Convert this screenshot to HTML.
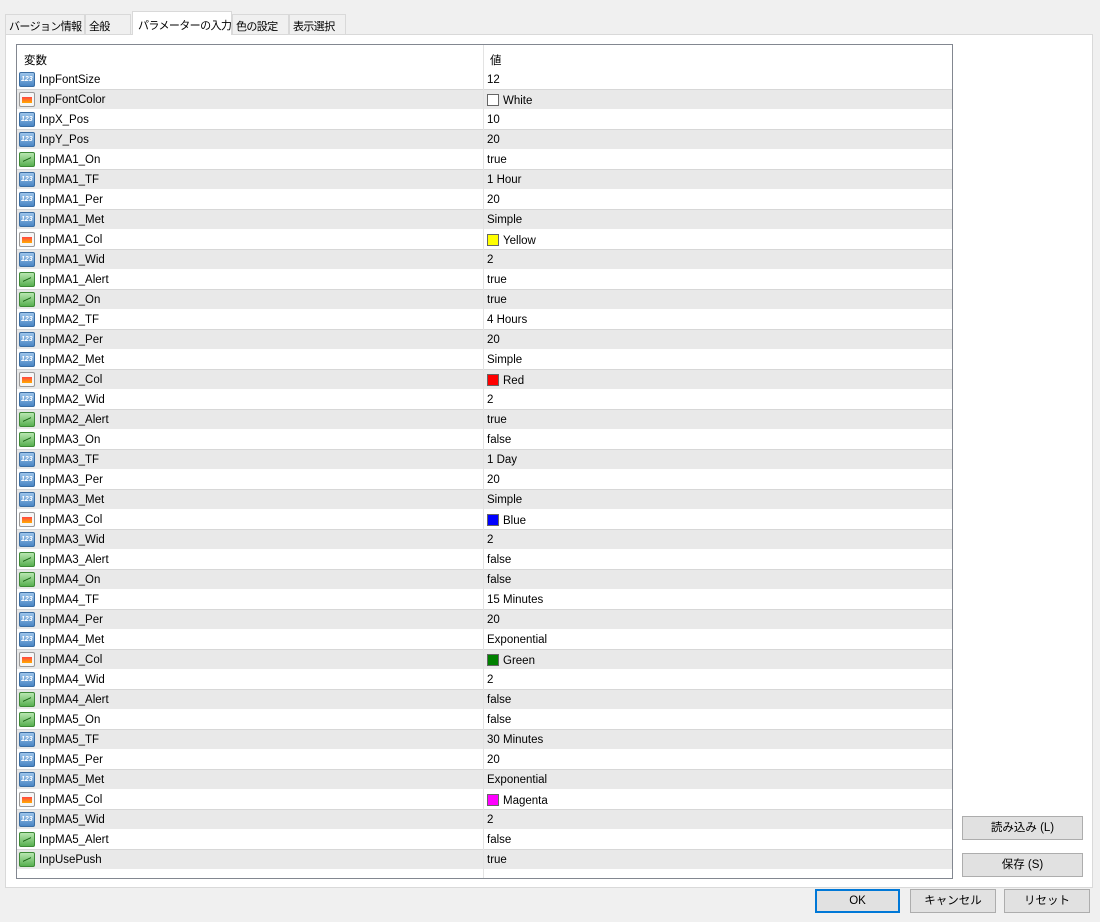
<!DOCTYPE html>
<html><head><meta charset="utf-8"><style>
*{margin:0;padding:0;box-sizing:border-box}
body{width:1100px;height:922px;background:#f0f0f0;font-family:"Liberation Sans","Noto Sans CJK JP",sans-serif;font-size:11.5px;color:#000;position:relative;overflow:hidden}
.tab{position:absolute;top:14px;height:20px;border:1px solid #d9d9d9;border-bottom:none;background:#f0f0f0;padding:3px 0 0 3px;font-size:11px;white-space:nowrap;overflow:hidden;letter-spacing:-0.6px}
.tab.act{top:11px;height:24px;background:#fff;z-index:2;padding-top:5px;padding-left:5px}
#panel{position:absolute;left:5px;top:34px;width:1088px;height:854px;background:#fff;border:1px solid #d9d9d9}
#tbl{position:absolute;left:16px;top:44px;width:937px;height:835px;border:1px solid #828790;background:#fff;overflow:hidden}
.hd{height:24px;position:relative;border-bottom:1px solid #fff}
.hd span{position:absolute;top:7px}
.r{height:20px;position:relative;border-top:1px solid #fff}
.r.g{background:#e9e9e9;border-top:1px solid #d7d7d7}
.r span{position:absolute;top:4px;white-space:nowrap}
.n{left:22px}.v{left:470px}
.ic{position:absolute;left:2px;top:2px;width:16px;height:15px;border-radius:2px}
.i1{background:linear-gradient(#9cc4ea,#4a86c4);border:1px solid #3b6ea3}
.i1::after{content:"123";position:absolute;left:1px;top:3px;font-size:7px;color:#fff;font-weight:bold}
.i2{background:#f6f6f6;border:1px solid #999}
.i2::after{content:"";position:absolute;left:2px;top:4px;width:10px;height:6px;background:linear-gradient(#f44,#fa0)}
.i3{background:linear-gradient(#b8e6b0,#58b050);border:1px solid #3d8a36}
.i3::after{content:"";position:absolute;left:3px;top:6px;width:8px;height:3px;border-top:1px solid #155f10;transform:skewY(-25deg)}
.sw{display:inline-block;width:12px;height:12px;border:1px solid #666;vertical-align:-2px;margin-right:4px}
.btn{position:absolute;background:#e1e1e1;border:1px solid #adadad;text-align:center;font-size:11.5px;line-height:23px}
</style></head><body>
<div class="tab" style="left:5px;width:80px">バージョン情報</div>
<div class="tab" style="left:85px;width:46px">全般</div>
<div class="tab act" style="left:132px;width:100px">パラメーターの入力</div>
<div class="tab" style="left:232px;width:57px">色の設定</div>
<div class="tab" style="left:289px;width:57px">表示選択</div>
<div id="panel"></div>
<div id="tbl">
<div style="position:absolute;left:466px;top:0;width:1px;height:100%;background:#e3e3e3;z-index:3"></div>
<div class="hd"><span style="left:7px">変数</span><span style="left:473px">値</span></div>
<div class="r"><i class="ic i1"></i><span class="n">InpFontSize</span><span class="v">12</span></div>
<div class="r g"><i class="ic i2"></i><span class="n">InpFontColor</span><span class="v"><i class="sw" style="background:#fff"></i>White</span></div>
<div class="r"><i class="ic i1"></i><span class="n">InpX_Pos</span><span class="v">10</span></div>
<div class="r g"><i class="ic i1"></i><span class="n">InpY_Pos</span><span class="v">20</span></div>
<div class="r"><i class="ic i3"></i><span class="n">InpMA1_On</span><span class="v">true</span></div>
<div class="r g"><i class="ic i1"></i><span class="n">InpMA1_TF</span><span class="v">1 Hour</span></div>
<div class="r"><i class="ic i1"></i><span class="n">InpMA1_Per</span><span class="v">20</span></div>
<div class="r g"><i class="ic i1"></i><span class="n">InpMA1_Met</span><span class="v">Simple</span></div>
<div class="r"><i class="ic i2"></i><span class="n">InpMA1_Col</span><span class="v"><i class="sw" style="background:#ff0"></i>Yellow</span></div>
<div class="r g"><i class="ic i1"></i><span class="n">InpMA1_Wid</span><span class="v">2</span></div>
<div class="r"><i class="ic i3"></i><span class="n">InpMA1_Alert</span><span class="v">true</span></div>
<div class="r g"><i class="ic i3"></i><span class="n">InpMA2_On</span><span class="v">true</span></div>
<div class="r"><i class="ic i1"></i><span class="n">InpMA2_TF</span><span class="v">4 Hours</span></div>
<div class="r g"><i class="ic i1"></i><span class="n">InpMA2_Per</span><span class="v">20</span></div>
<div class="r"><i class="ic i1"></i><span class="n">InpMA2_Met</span><span class="v">Simple</span></div>
<div class="r g"><i class="ic i2"></i><span class="n">InpMA2_Col</span><span class="v"><i class="sw" style="background:#f00"></i>Red</span></div>
<div class="r"><i class="ic i1"></i><span class="n">InpMA2_Wid</span><span class="v">2</span></div>
<div class="r g"><i class="ic i3"></i><span class="n">InpMA2_Alert</span><span class="v">true</span></div>
<div class="r"><i class="ic i3"></i><span class="n">InpMA3_On</span><span class="v">false</span></div>
<div class="r g"><i class="ic i1"></i><span class="n">InpMA3_TF</span><span class="v">1 Day</span></div>
<div class="r"><i class="ic i1"></i><span class="n">InpMA3_Per</span><span class="v">20</span></div>
<div class="r g"><i class="ic i1"></i><span class="n">InpMA3_Met</span><span class="v">Simple</span></div>
<div class="r"><i class="ic i2"></i><span class="n">InpMA3_Col</span><span class="v"><i class="sw" style="background:#00f"></i>Blue</span></div>
<div class="r g"><i class="ic i1"></i><span class="n">InpMA3_Wid</span><span class="v">2</span></div>
<div class="r"><i class="ic i3"></i><span class="n">InpMA3_Alert</span><span class="v">false</span></div>
<div class="r g"><i class="ic i3"></i><span class="n">InpMA4_On</span><span class="v">false</span></div>
<div class="r"><i class="ic i1"></i><span class="n">InpMA4_TF</span><span class="v">15 Minutes</span></div>
<div class="r g"><i class="ic i1"></i><span class="n">InpMA4_Per</span><span class="v">20</span></div>
<div class="r"><i class="ic i1"></i><span class="n">InpMA4_Met</span><span class="v">Exponential</span></div>
<div class="r g"><i class="ic i2"></i><span class="n">InpMA4_Col</span><span class="v"><i class="sw" style="background:#008000"></i>Green</span></div>
<div class="r"><i class="ic i1"></i><span class="n">InpMA4_Wid</span><span class="v">2</span></div>
<div class="r g"><i class="ic i3"></i><span class="n">InpMA4_Alert</span><span class="v">false</span></div>
<div class="r"><i class="ic i3"></i><span class="n">InpMA5_On</span><span class="v">false</span></div>
<div class="r g"><i class="ic i1"></i><span class="n">InpMA5_TF</span><span class="v">30 Minutes</span></div>
<div class="r"><i class="ic i1"></i><span class="n">InpMA5_Per</span><span class="v">20</span></div>
<div class="r g"><i class="ic i1"></i><span class="n">InpMA5_Met</span><span class="v">Exponential</span></div>
<div class="r"><i class="ic i2"></i><span class="n">InpMA5_Col</span><span class="v"><i class="sw" style="background:#f0f"></i>Magenta</span></div>
<div class="r g"><i class="ic i1"></i><span class="n">InpMA5_Wid</span><span class="v">2</span></div>
<div class="r"><i class="ic i3"></i><span class="n">InpMA5_Alert</span><span class="v">false</span></div>
<div class="r g"><i class="ic i3"></i><span class="n">InpUsePush</span><span class="v">true</span></div>
</div>
<div class="btn" style="left:962px;top:816px;width:121px;height:24px">読み込み (L)</div>
<div class="btn" style="left:962px;top:853px;width:121px;height:24px">保存 (S)</div>
<div class="btn" style="left:815px;top:889px;width:85px;height:24px;border:2px solid #0078d7;line-height:20px">OK</div>
<div class="btn" style="left:910px;top:889px;width:86px;height:24px">キャンセル</div>
<div class="btn" style="left:1004px;top:889px;width:86px;height:24px">リセット</div>
</body></html>
